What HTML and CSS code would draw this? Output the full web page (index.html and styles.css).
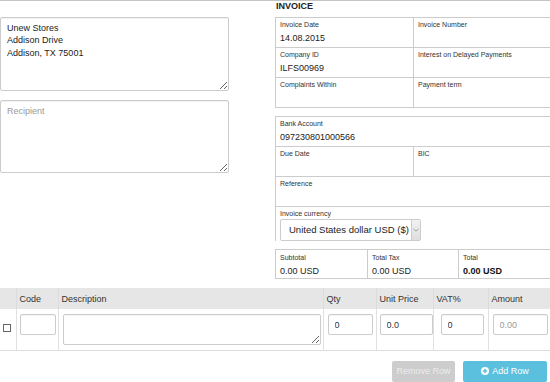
FILE: index.html
```html
<!DOCTYPE html>
<html lang="en">
<head>
<meta charset="utf-8">
<title>Invoice</title>
<link rel="stylesheet" href="styles.css">
</head>
<body>
<div class="page">
  <div class="top">
    <div class="left">
      <textarea class="addr">Unew Stores
Addison Drive
Addison, TX 75001</textarea>
      <textarea class="addr" placeholder="Recipient"></textarea>
    </div>
    <div class="right">
      <h1 class="title">INVOICE</h1>
      <div class="fields">
        <div class="cell"><div class="lbl">Invoice Date</div><div class="val">14.08.2015</div></div>
        <div class="cell"><div class="lbl">Invoice Number</div><div class="val"></div></div>
        <div class="cell"><div class="lbl">Company ID</div><div class="val">ILFS00969</div></div>
        <div class="cell"><div class="lbl">Interest on Delayed Payments</div><div class="val"></div></div>
        <div class="cell"><div class="lbl">Complaints Within</div><div class="val"></div></div>
        <div class="cell"><div class="lbl">Payment term</div><div class="val"></div></div>
      </div>
      <div class="fields fields-b">
        <div class="cell span2"><div class="lbl">Bank Account</div><div class="val">097230801000566</div></div>
        <div class="cell"><div class="lbl">Due Date</div><div class="val"></div></div>
        <div class="cell"><div class="lbl">BIC</div><div class="val"></div></div>
        <div class="cell span2"><div class="lbl">Reference</div><div class="val"></div></div>
        <div class="cell span2 currency">
          <div class="lbl">Invoice currency</div>
          <div class="select"><span class="select-text">United States dollar USD ($)</span><span class="select-arrow"><svg width="6" height="4" viewBox="0 0 6 4"><path d="M0.5 0.8 L3 3.2 L5.5 0.8" fill="none" stroke="#888" stroke-width="0.8"/></svg></span></div>
        </div>
      </div>
      <div class="totals">
        <div class="tcell"><div class="lbl">Subtotal</div><div class="val">0.00 USD</div></div>
        <div class="tcell"><div class="lbl">Total Tax</div><div class="val">0.00 USD</div></div>
        <div class="tcell"><div class="lbl">Total</div><div class="val strong">0.00 USD</div></div>
      </div>
    </div>
  </div>

  <table class="items">
    <thead>
      <tr>
        <th class="c-chk"></th>
        <th class="c-code">Code</th>
        <th class="c-desc">Description</th>
        <th class="c-qty">Qty</th>
        <th class="c-price">Unit Price</th>
        <th class="c-vat">VAT%</th>
        <th class="c-amt">Amount</th>
      </tr>
    </thead>
    <tbody>
      <tr>
        <td class="c-chk"><span class="chk"></span></td>
        <td class="c-code"><input class="inp in-code" type="text"></td>
        <td class="c-desc"><textarea class="inp in-desc"></textarea></td>
        <td class="c-qty"><input class="inp in-qty" type="text" value="0"></td>
        <td class="c-price"><input class="inp in-price" type="text" value="0.0"></td>
        <td class="c-vat"><input class="inp in-vat" type="text" value="0"></td>
        <td class="c-amt"><input class="inp in-amt" type="text" placeholder="0.00"></td>
      </tr>
    </tbody>
  </table>

  <div class="actions">
    <button class="btn btn-remove" type="button">Remove Row</button>
    <button class="btn btn-add" type="button"><svg class="plus" width="8" height="8" viewBox="0 0 8 8"><circle cx="4" cy="4" r="4" fill="#fff"/><path d="M4 1.8 V6.2 M1.8 4 H6.2" stroke="#5bc0de" stroke-width="1.4"/></svg>Add Row</button>
  </div>
</div>
</body>
</html>
```
FILE: styles.css
```css
* { box-sizing: border-box; }
html, body { margin: 0; padding: 0; }
body {
  width: 550px;
  height: 382px;
  overflow: hidden;
  background: #fff;
  color: #333;
  font-family: "Liberation Sans", Arial, sans-serif;
  border-top: 1px solid #c4c4c4;
}
.page { width: 560px; }

.top { display: flex; gap: 46px; }

.left {
  width: 229px;
  display: flex;
  flex-direction: column;
  gap: 9px;
  padding-top: 16px;
}
.addr {
  display: block;
  width: 229px;
  height: 74px;
  margin: 0;
  padding: 4px 6px;
  font-family: "Liberation Sans", Arial, sans-serif;
  font-size: 9px;
  line-height: 12.4px;
  color: #222;
  border: 1px solid #ccc;
  border-radius: 2px;
  box-shadow: inset 0 1px 1px rgba(0,0,0,0.06);
  outline: none;
}
.addr + .addr { height: 73px; }
.addr::placeholder { color: #999; }

.right { width: 285px; }
.title {
  margin: 0 0 5px 0;
  font-size: 9px;
  line-height: 11px;
  font-weight: bold;
  color: #222;
  padding-left: 1px;
}

.fields {
  display: grid;
  grid-template-columns: 138px 1fr;
  border-top: 1px solid #ccc;
  border-left: 1px solid #ccc;
}
.fields-b { margin-top: 8px; }
.cell {
  height: 30px;
  border-right: 1px solid #ccc;
  border-bottom: 1px solid #ccc;
  padding: 2px 4px 0 4px;
}
.span2 { grid-column: span 2; }
.lbl {
  font-size: 7px;
  line-height: 9px;
  color: #333;
  white-space: nowrap;
}
.val {
  margin-top: 3px;
  font-size: 9px;
  line-height: 12px;
  color: #222;
  white-space: nowrap;
}
.currency {
  height: 34px;
  border-bottom: none;
  border-right: none;
}
.select {
  display: flex;
  align-items: stretch;
  width: 141px;
  height: 22px;
  margin-top: 1px;
  border: 1px solid #ccc;
  border-radius: 2px;
  background: #fff;
}
.select-text {
  flex: 1;
  padding-left: 8px;
  font-size: 9.5px;
  line-height: 20px;
  color: #222;
  white-space: nowrap;
}
.select-arrow {
  width: 9px;
  display: flex;
  align-items: center;
  justify-content: center;
  background: linear-gradient(#f2f2f2, #dedede);
  border-left: 1px solid #ccc;
}

.totals {
  display: grid;
  grid-template-columns: 92px 91px 1fr;
  margin-top: 8px;
  border-top: 1px solid #ccc;
  border-left: 1px solid #ccc;
}
.tcell {
  height: 29px;
  border-right: 1px solid #ccc;
  border-bottom: 1px solid #ccc;
  padding: 3px 4px 0 4px;
}
.strong { font-weight: bold; color: #111; }

.items {
  width: 560px;
  margin-top: 9px;
  border-collapse: collapse;
  table-layout: fixed;
}
.items th {
  height: 21px;
  background: #e6e6e6;
  font-weight: normal;
  font-size: 9px;
  color: #333;
  text-align: left;
  padding: 0 3px;
  border-left: 1px solid #dcdcdc;
}
.items th:first-child, .items td:first-child { border-left: none; }
.items td {
  height: 41px;
  vertical-align: top;
  padding: 5px 3px 0 3px;
  border-left: 1px solid #e0e0e0;
  border-bottom: 1px solid #dcdcdc;
}
.c-chk { width: 16px; }
.c-code { width: 42px; }
.c-desc { width: 265px; }
.c-qty { width: 53px; }
.c-price { width: 57px; }
.c-vat { width: 55px; }
.items td.c-chk { vertical-align: middle; padding: 0 0 0 3px; }
.chk {
  display: block;
  width: 8px;
  height: 8px;
  border: 1px solid #666;
  background: #fff;
  margin-top: -3px;
}
.inp {
  display: block;
  height: 21px;
  margin: 0;
  padding: 0 6px;
  font-family: "Liberation Sans", Arial, sans-serif;
  font-size: 9px;
  color: #333;
  border: 1px solid #ccc;
  border-radius: 2px;
  background: #fff;
  box-shadow: inset 0 1px 1px rgba(0,0,0,0.05);
  outline: none;
}
.inp::placeholder { color: #999; }
.in-code { width: 36px; }
.in-desc { width: 258px; height: 31px; margin-left: 1px; }
.in-qty { width: 45px; margin-left: 1px; }
.in-price { width: 53px; }
.in-vat { width: 43px; margin-left: 4px; }
.in-amt { width: 55px; margin-left: 1px; }

.actions {
  width: 550px;
  display: flex;
  justify-content: flex-end;
  gap: 8px;
  padding-right: 3px;
  margin-top: 10px;
}
.btn {
  height: 21px;
  border: none;
  border-radius: 2px;
  font-family: "Liberation Sans", Arial, sans-serif;
  font-size: 9px;
  padding: 0;
  display: flex;
  align-items: center;
  justify-content: center;
  gap: 3px;
}
.btn-remove { width: 63px; background: #cdcdcd; color: #ececec; }
.btn-add { width: 84px; background: #5bc0de; color: #fff; }
.plus { display: block; }
```
